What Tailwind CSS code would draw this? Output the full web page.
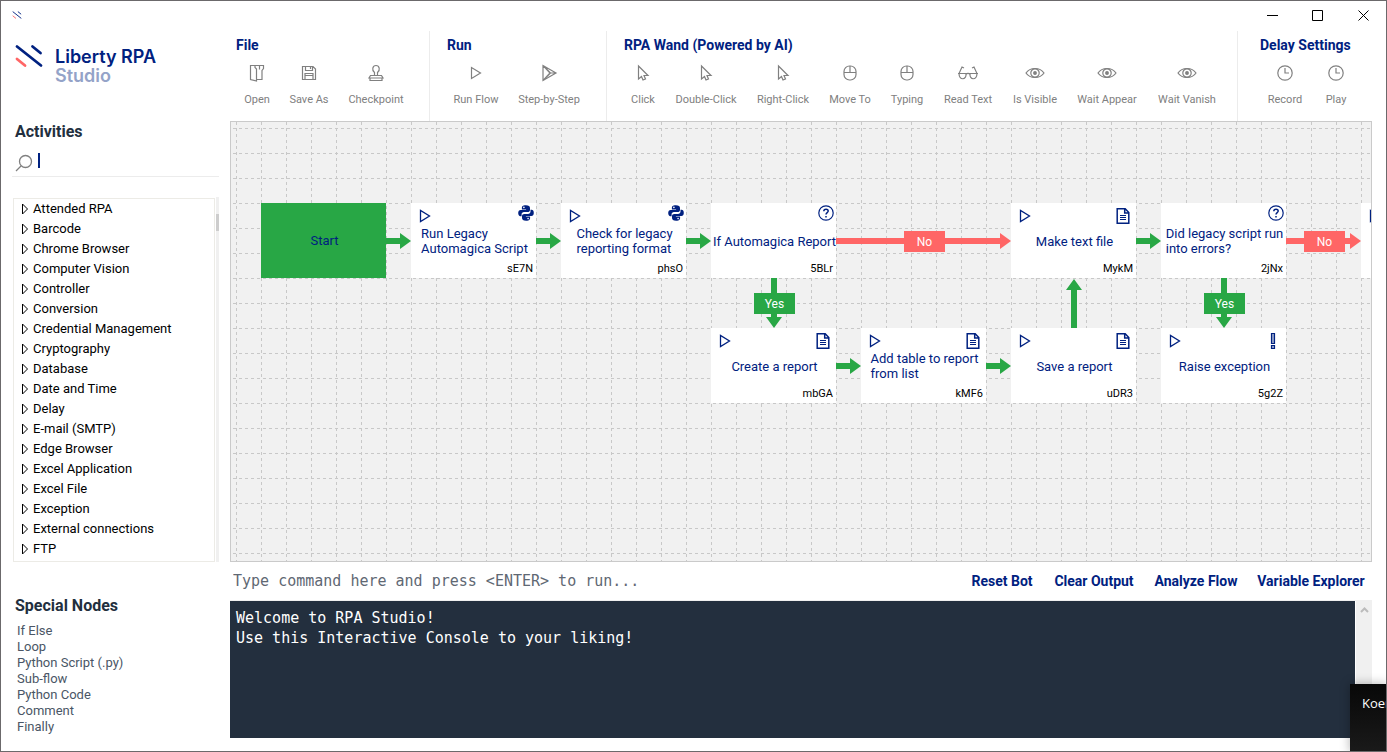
<!DOCTYPE html>
<html lang="en">

<head>
  <meta charset="UTF-8" />
  <meta name="viewport" content="width=device-width, initial-scale=1.0" />
  <title>Liberty RPA Studio</title>
  <script src="https://cdn.jsdelivr.net/npm/@tailwindcss/browser@4"></script>
</head>

<body class="relative flex h-screen flex-col overflow-hidden border border-[#6b696b] bg-white font-['Roboto',sans-serif] text-[#002180]">

  <!-- icon sprites -->
  <svg class="hidden" aria-hidden="true">
    <symbol id="logo" viewBox="0 0 28 24">
      <g fill="none" stroke-width="2.8" stroke-linecap="round">
        <path stroke="#002180" d="M2 2.500 26 21.500M17.500 2.500 25.500 9" />
        <path stroke="#ff6666" d="M2 15 10 21.500" />
      </g>
    </symbol>
    <symbol id="open" viewBox="0 0 16 18"><path d="M6 1.500H1.500v14l6 1.500V5L6 3.500v-2h8.500v3l-1.500 2v9H7.500M10.500 2v3.500" /></symbol>
    <symbol id="save" viewBox="0 0 16 18"><path d="M1.500 2.500h10.500l2.500 2.500v10.500h-13zM4.500 2.500v4h7v-4M9.500 3v2M4 15.500v-6h8v6M4 11.500h8" /></symbol>
    <symbol id="stamp" viewBox="0 0 16 18"><path d="M6.500 11.500V8.500C3.500 6 4.500 1.500 8 1.500s4.500 4.500 1.500 7v3M2.500 11.500h11l1.500 2.500H1zM2 14.500v2h12v-2" /></symbol>
    <symbol id="run" viewBox="0 0 16 18"><path d="M3.500 3.500v11l9-5.500z" /></symbol>
    <symbol id="step" viewBox="0 0 16 18"><path d="M2 1.500v15L15 9zM2.500 2 9 9l-6.500 7M9 9h5M6 5.500 9.500 9 6 12.500" /></symbol>
    <symbol id="cursor" viewBox="0 0 16 18"><path d="M3.500 2v13l3-2.500 1.500 3.500 2.500-1-1.500-3.500h4z" /></symbol>
    <symbol id="mouse" viewBox="0 0 16 18"><rect x="2" y="2" width="12" height="14" rx="5.500" /><path d="M2 8.500h12M8 2v6" /></symbol>
    <symbol id="glasses" viewBox="0 0 20 18"><path d="M0 9.500h8c.7 7-6.700 7-7 0l3-6.500 2 1M20 9.500h-8c-.7 7 6.700 7 7 0l-3-6.500-2 1M8 10.500c1-1.500 3-1.500 4 0" /></symbol>
    <symbol id="eye" viewBox="0 0 20 18"><path d="M1 9c4-6 14-6 18 0-4 6-14 6-18 0z" /><circle cx="10" cy="9" r="4.200" /><circle cx="10" cy="9" r="1.300" fill="currentColor" /></symbol>
    <symbol id="clock" viewBox="0 0 16 18"><circle cx="8" cy="9" r="7.200" /><path d="M8 4v5h4" /></symbol>
    <symbol id="search" viewBox="0 0 18 18"><circle cx="10.500" cy="7.500" r="6" /><path d="m6 12-5 5" /></symbol>
    <symbol id="node-run" viewBox="0 0 12 14"><path d="M1.500 1.500v11l9-5.500z" /></symbol>
    <symbol id="twisty" viewBox="0 0 8 12"><path d="M1.500 1v10l5-5z" /></symbol>
    <symbol id="python" viewBox="0 0 16 16">
      <g fill="currentColor" stroke="none">
        <path d="M7.900.3c-3.500 0-4 1.300-4 2.700v1.400h4.200v.7H2.600C1.200 5.100.2 6.200.2 8.100s.9 3.100 2.200 3.100h1.200V9.400c0-1.400 1-2.300 2.400-2.300h3.800c1.200 0 2.200-.9 2.200-2.100V3c0-1.600-1.300-2.700-4.100-2.700zM5.900 1.600a.8.800 0 1 1 0 1.600.8.800 0 0 1 0-1.600z" />
        <path d="M8.100 15.700c3.500 0 4-1.300 4-2.700v-1.400H7.900v-.7h5.500c1.400 0 2.400-1.100 2.400-3s-.9-3.100-2.200-3.100h-1.100v1.800c0 1.400-1.100 2.300-2.500 2.300H6.200c-1.200 0-2.200.9-2.200 2.100v2c0 1.600 1.300 2.700 4.100 2.700zm2-1.300a.8.800 0 1 1 0-1.600.8.800 0 0 1 0 1.600z" />
      </g>
    </symbol>
    <symbol id="question" viewBox="0 0 16 16"><circle cx="8" cy="8" r="7.200" /><path stroke-width="1.500" d="M5.800 6.300c0-2.900 4.400-2.700 4.400-.2 0 1.600-2.200 1.500-2.200 3.400M8 11v1.500" /></symbol>
    <symbol id="doc" viewBox="0 0 16 16"><path stroke-width="1.500" d="M2.200.8h8l3.600 3.700v10.700H2.200zM9.700.8v4.200h4" /><path d="M5 7.500h6M5 9.500h6M5 11.500h6" /></symbol>
    <symbol id="bang" viewBox="0 0 16 16"><path d="M6.500.5h3v10h-3zM6.500 12.500h3v3h-3z" fill="#94a3c8" /></symbol>
  </svg>

  <!-- title bar -->
  <header class="flex h-[30px] shrink-0 items-start justify-between pl-[11px]">
    <svg class="mt-[10px] h-2 w-[10px]"><use href="#logo" /></svg>
    <div class="flex text-black">
      <button aria-label="Minimize" class="flex h-7 w-[45px] items-center justify-center"><svg class="size-[11px]" stroke="currentColor"><path d="M0 5.500h11" /></svg></button>
      <button aria-label="Maximize" class="flex h-7 w-[45px] items-center justify-center"><svg class="size-[11px]" fill="none" stroke="currentColor"><path d="M.5.5h10v10H.5z" /></svg></button>
      <button aria-label="Close" class="flex h-7 w-[46px] items-center justify-center"><svg class="size-[11px]" stroke="currentColor"><path d="m.5.5 10 10m0-10-10 10" /></svg></button>
    </div>
  </header>

  <div class="flex min-h-0 flex-1">

    <!-- sidebar -->
    <aside class="flex w-[229px] shrink-0 flex-col pr-[11px] pb-4 pl-[11px]">
      <div class="flex h-[91px] shrink-0 gap-3 pt-[13px] pl-[3px]">
        <svg class="h-6 w-7"><use href="#logo" /></svg>
        <div class="pt-[3px] font-['Inter',sans-serif] text-[18px] leading-[19px] font-semibold">
          <div>Liberty RPA</div>
          <div class="text-[#94a3c8]">Studio</div>
        </div>
      </div>

      <label for="search" class="pl-[3px] text-[16px] leading-5 font-bold text-[#222f3e]">Activities</label>
      <div class="relative mt-1 flex h-[31px] shrink-0 items-center gap-[5px] border-b border-[#ececec] pt-1 pl-[3px]">
        <svg class="size-[18px] shrink-0 text-[#808080]" fill="none" stroke="currentColor" stroke-width="1.300"><use href="#search" /></svg>
        <input id="search" type="text" class="h-5 min-w-0 flex-1 text-[13px] outline-none" />
        <span class="absolute top-[7px] left-[26px] h-[15px] w-[2px] bg-[#002180]"></span>
      </div>

      <div class="mt-[20px] flex min-h-0 flex-1">
        <ul id="activities" class="mt-px ml-px min-w-0 flex-1 overflow-hidden border border-[#ecebe6] text-[13px] text-black"></ul>
        <div class="ml-px w-[3px] bg-[#f0f0f0] pt-[17px]"><div class="h-[17px] bg-[#cdcdcd]"></div></div>
      </div>

      <h2 class="mt-[34px] pl-[3px] text-[16px] leading-5 font-bold text-[#222f3e]">Special Nodes</h2>
      <ul id="specialNodes" class="mt-[7px] pl-[5px] text-[13px] leading-4 text-[#4a5666]"></ul>
    </aside>

    <main class="flex min-w-0 flex-1 flex-col pr-[14px] pb-[13px]">

      <!-- ribbon -->
      <nav class="flex h-[90px] shrink-0 text-[11px] text-[#808080]">
        <section class="border-r border-[#ececec] pr-4 pl-[5px]">
          <h2 class="pt-1 pl-px text-[14px] leading-5 font-bold text-[#002180]">File</h2>
          <div id="fileTools" class="flex"></div>
        </section>
        <section class="border-r border-[#ececec] pr-4 pl-[14px]">
          <h2 class="pt-1 pl-[3px] text-[14px] leading-5 font-bold text-[#002180]">Run</h2>
          <div id="runTools" class="flex"></div>
        </section>
        <section class="border-r border-[#ececec] pr-[10px] pl-[14px]">
          <h2 class="pt-1 pl-[3px] text-[14px] leading-5 font-bold text-[#002180]">RPA Wand (Powered by AI)</h2>
          <div id="wandTools" class="flex"></div>
        </section>
        <section class="pl-[19px]">
          <h2 class="pt-1 pl-[3px] text-[14px] leading-5 font-bold whitespace-nowrap text-[#002180]">Delay Settings</h2>
          <div id="delayTools" class="flex"></div>
        </section>
      </nav>

      <!-- flow canvas -->
      <div id="flow" class="relative min-h-0 flex-1 overflow-hidden border border-[#cacaca] bg-[#f1f1f1]">
        <svg class="absolute inset-0 size-full">
          <defs>
            <pattern id="gridX" x="5" y="0" width="25" height="6" patternUnits="userSpaceOnUse"><rect width="1" height="3" fill="#c8c8c8" /></pattern>
            <pattern id="gridY" x="2" y="6" width="6" height="25" patternUnits="userSpaceOnUse"><rect width="3" height="1" fill="#c8c8c8" /></pattern>
          </defs>
          <rect width="100%" height="100%" fill="url(#gridX)" />
          <rect width="100%" height="100%" fill="url(#gridY)" />
          <g fill="#28a745">
            <path d="M155 116h14v-5l11 8-11 8v-5h-14z" />
            <path d="M305 116h14v-5l11 8-11 8v-5h-14z" />
            <path d="M455 116h14v-5l11 8-11 8v-5h-14z" />
            <path d="M905 116h14v-5l11 8-11 8v-5h-14z" />
            <path d="M605 241h14v-5l11 8-11 8v-5h-14z" />
            <path d="M755 241h14v-5l11 8-11 8v-5h-14z" />
            <path d="M540 156v39h-5l8 11 8-11h-5v-39z" />
            <path d="M990 156v39h-5l8 11 8-11h-5v-39z" />
            <path d="M840 206v-38h-5l8-11 8 11h-5v38z" />
          </g>
          <g fill="#ff6666">
            <path d="M605 116h164v-5l11 8-11 8v-5H605z" />
            <path d="M1055 116h64v-5l11 8-11 8v-5h-64z" />
          </g>
        </svg>
      </div>

      <!-- command line -->
      <div class="flex h-[38px] shrink-0 items-center gap-[18px] pr-[5px]">
        <input type="text" aria-label="Command" placeholder="Type command here and press &lt;ENTER&gt; to run..." class="min-w-0 flex-1 pt-px pl-[3px] font-['DejaVu_Sans_Mono',monospace] text-[15px] placeholder-[#5f6873] outline-none" />
        <div class="flex shrink-0 gap-[15px] text-[14px] font-bold whitespace-nowrap">
          <button class="w-[68px]">Reset Bot</button>
          <button class="w-[86px]">Clear Output</button>
          <button class="w-[88px]">Analyze Flow</button>
          <button class="w-[112px]">Variable Explorer</button>
        </div>
      </div>

      <div class="flex h-[138px] shrink-0 border-t border-[#f0f0f0]">
        <div class="min-w-0 flex-1 bg-[#232f3e] px-[6px] pt-[7px] font-['DejaVu_Sans_Mono',monospace] text-[15px] leading-5 text-white">
          <p>Welcome to RPA Studio!</p>
          <p>Use this Interactive Console to your liking!</p>
        </div>
        <div class="ml-px flex w-4 justify-center bg-[#f0f0f0] pt-[5px]">
          <svg class="h-2 w-[9px]" fill="none" stroke="#bcbcbc" stroke-width="2"><path d="m1 6 3.500-3.500L8 6" /></svg>
        </div>
      </div>
    </main>
  </div>

  <!-- notification peeking in from the right edge -->
  <div class="absolute -right-px -bottom-px h-[68px] w-[37px] overflow-hidden bg-gradient-to-b from-[#080808] to-[#1a1a1a] pt-[9px] pl-3 font-['Open_Sans',sans-serif] text-[13px] leading-5 whitespace-nowrap text-white shadow-[0_0_10px_rgba(0,0,0,0.3)]">Koen</div>

  <script>
    const activities = ["Attended RPA", "Barcode", "Chrome Browser", "Computer Vision", "Controller", "Conversion",
      "Credential Management", "Cryptography", "Database", "Date and Time", "Delay", "E-mail (SMTP)", "Edge Browser",
      "Excel Application", "Excel File", "Exception", "External connections", "FTP"];
    const specialNodes = ["If Else", "Loop", "Python Script (.py)", "Sub-flow", "Python Code", "Comment", "Finally"];

    const tools = {
      fileTools: [["Open", "open", "w-[44px]"], ["Save As", "save", "w-[60px]"], ["Checkpoint", "stamp", "w-[74px]"]],
      runTools: [["Run Flow", "run", "w-[64px]"], ["Step-by-Step", "step", "w-[82px]"]],
      wandTools: [["Click", "cursor", "w-[44px]"], ["Double-Click", "cursor", "w-[82px]"], ["Right-Click", "cursor", "w-[72px]"],
        ["Move To", "mouse", "w-[62px]"], ["Typing", "mouse", "w-[52px]"], ["Read Text", "glasses", "w-[70px]"],
        ["Is Visible", "eye", "w-[64px]"], ["Wait Appear", "eye", "w-[80px]"], ["Wait Vanish", "eye", "w-[80px]"]],
      delayTools: [["Record", "clock", "w-[56px]"], ["Play", "clock", "w-[46px]"]],
    };

    // x and y are canvas coordinates of the top left corner
    const nodes = [
      { x: 180, y: 81, text: "Run Legacy<br>Automagica Script", id: "sE7N", icon: "python", run: true },
      { x: 330, y: 81, text: "Check for legacy<br>reporting format", id: "phsO", icon: "python", run: true },
      { x: 480, y: 81, text: "If Automagica Report", id: "5BLr", icon: "question" },
      { x: 780, y: 81, text: "Make text file", id: "MykM", icon: "doc", run: true },
      { x: 930, y: 81, text: "Did legacy script run<br>into errors?", id: "2jNx", icon: "question" },
      { x: 1130, y: 81, text: "", id: "", icon: "doc", run: true },
      { x: 480, y: 206, text: "Create a report", id: "mbGA", icon: "doc", run: true },
      { x: 630, y: 206, text: "Add table to report<br>from list", id: "kMF6", icon: "doc", run: true },
      { x: 780, y: 206, text: "Save a report", id: "uDR3", icon: "doc", run: true },
      { x: 930, y: 206, text: "Raise exception", id: "5g2Z", icon: "bang", run: true },
    ];
    const labels = [
      { x: 523, y: 171, text: "Yes", color: "bg-[#28a745]" },
      { x: 973, y: 171, text: "Yes", color: "bg-[#28a745]" },
      { x: 673, y: 109, text: "No", color: "bg-[#ff6666]" },
      { x: 1073, y: 109, text: "No", color: "bg-[#ff6666]" },
    ];

    document.getElementById("activities").innerHTML = activities.map((name) => `
      <li><button class="flex h-5 items-center gap-1 pl-[7px] whitespace-nowrap">
        <svg class="h-3 w-2" fill="none" stroke="currentColor"><use href="#twisty" /></svg>${name}</button></li>`).join("");

    document.getElementById("specialNodes").innerHTML = specialNodes.map((name) => `
      <li><button class="block">${name}</button></li>`).join("");

    Object.entries(tools).forEach(([id, items]) => {
      document.getElementById(id).innerHTML = items.map(([name, icon, width]) => `
        <button class="flex flex-col items-center gap-[10px] pt-[9px] leading-4 whitespace-nowrap ${width}">
          <svg class="h-[18px] w-5" fill="none" stroke="currentColor" stroke-width="1.200"><use href="#${icon}" /></svg>
          <span>${name}</span>
        </button>`).join("");
    });

    const flow = document.getElementById("flow");
    flow.insertAdjacentHTML("beforeend", `
      <div class="absolute flex h-[75px] w-[125px] items-center justify-center bg-[#28a745] pt-px pl-[2px] text-[13px]" style="left:30px;top:81px">Start</div>`);

    nodes.forEach((n) => {
      const play = n.run ? `<button aria-label="Run node" class="absolute top-[6px] left-2"><svg class="h-[14px] w-3" fill="none" stroke="currentColor" stroke-width="1.300"><use href="#node-run" /></svg></button>` : "";
      const iconPlace = n.icon === "python" || n.icon === "question" ? "top-[2px] right-[2px]" : "top-[5px] right-[5px]";
      flow.insertAdjacentHTML("beforeend", `
        <div class="absolute flex h-[75px] w-[125px] items-center justify-center bg-white pt-px pl-[2px] text-[13px] leading-[15px] whitespace-nowrap" style="left:${n.x}px;top:${n.y}px">
          ${play}
          <svg class="absolute size-4 ${iconPlace}" fill="none" stroke="currentColor" stroke-width="1.200"><use href="#${n.icon}" /></svg>
          <p>${n.text}</p>
          <span class="absolute right-[3px] bottom-[2px] text-[11px] text-black">${n.id}</span>
        </div>`);
    });

    labels.forEach((l) => {
      flow.insertAdjacentHTML("beforeend", `
        <div class="absolute flex h-[21px] w-[41px] items-center justify-center text-[12px] text-white ${l.color}" style="left:${l.x}px;top:${l.y}px">${l.text}</div>`);
    });
  </script>
</body>

</html>
